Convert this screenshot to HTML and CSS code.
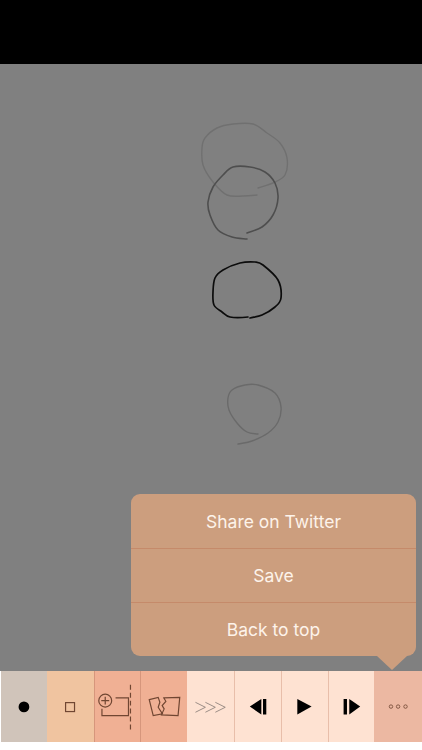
FILE: index.html
```html
<!DOCTYPE html>
<html lang="en">

<head>
    <meta charset="UTF-8">
    <meta name="viewport" content="width=device-width, initial-scale=1.0">
    <title>Sketch</title>
    <link rel="stylesheet" href="styles.css">
</head>

<body>
    <div class="topbar"></div>

    <div class="canvas">
        <!-- strokes, viewBox uses page coordinates -->
        <svg class="canvas__strokes" viewBox="0 64 422 607">
            <path class="stroke stroke--faint" d="M258 188 C263 186 268.5 185.2 273 183 S282.7 179.2 285 175 S287.8 163.3 287 158 S283.3 147.2 280 143 S271.5 136.2 267 133 S258.7 125.5 253 124 S239 123.3 233 124 S221.7 125.7 217 128 S207.5 134.7 205 138 S202.3 143.5 202 148 S201.2 159.3 203 165 S209 177 213 182 S222 192.7 227 195 S238 196 243 196 S252 195.5 257 195" />
            <path class="stroke stroke--mid" d="M247 233 C252 231 257.7 230 262 227 S270.3 219.8 273 215 S277.7 203.3 278 198 S277.2 187.3 275 183 S269.2 174.7 265 172 S255.3 167.8 250 167 S237.5 165.7 233 167 S226.3 171.7 223 175 S215.5 182.5 213 187 S208.5 197.3 208 202 S208.3 210.3 210 215 S214.3 226.3 218 230 S227.2 235.5 232 237 S242 238.5 247 239" />
            <path class="stroke stroke--dark" d="M250 318 C254 317 257.8 316.8 262 315 S271.8 309.8 275 307 S280.5 302.5 281 298 S281 285.5 278 280 S266.8 268 263 265 S258.8 262.3 255 262 S245.3 261.7 240 263 S227.2 267.5 223 270 S216.7 274.3 215 278 S213.2 287.5 213 292 S212.5 301.7 214 305 S219.3 310 222 312 S225.7 316.2 230 317 S243 317.5 248 317" />
            <path class="stroke stroke--soft" d="M238 444 C243 443 247 442.8 252 441 S263.7 436.2 268 433 S275.8 426.3 278 422 S281.5 411.8 281 407 S278.8 396.7 275 393 S263 386.3 258 385 S249.3 384.2 245 385 S234.8 387.8 232 390 S228.5 394.7 228 398 S227.5 405.8 229 410 S234 419.3 237 423 S243.5 430.2 247 432 S254 433.5 258 434" />
        </svg>

        <div class="popup">
            <div class="popup__item">Share on Twitter</div>
            <div class="popup__item">Save</div>
            <div class="popup__item">Back to top</div>
            <div class="popup__arrow"></div>
        </div>
    </div>

    <div class="toolbar">
        <div class="tool tool--grey">
            <svg viewBox="0 0 47 71"><circle cx="23.1" cy="35.3" r="5.4" fill="#000" /></svg>
        </div>
        <div class="tool tool--peach">
            <svg viewBox="0 0 47 71"><rect class="line" x="18.7" y="31" width="9" height="9" /></svg>
        </div>
        <div class="tool tool--salmon tool--edged">
            <svg viewBox="0 0 47 71">
                <circle class="line" cx="11.3" cy="29" r="6.5" />
                <path class="line" d="M11.3 25 V33 M7.3 29 H15.3" />
                <path class="line" d="M21.7 26.3 H34.7 V44 H8 V37.3" />
                <path class="line line--dash" d="M36.7 13 V58" />
            </svg>
        </div>
        <div class="tool tool--salmon">
            <svg viewBox="0 0 47 71">
                <path class="line" d="M8.3 28 L17.3 25.7 L19 30.7 L17.3 35.7 L21.6 42.3 L12.3 44 Z" />
                <path class="line" d="M23 26.3 L39 25.7 L37.3 44 L20.6 43.3 L23.3 37.3 L21.3 34 L25 29.7 Z" />
            </svg>
        </div>
        <div class="tool">
            <svg viewBox="0 0 47 71">
                <path class="line line--thin" d="M8.5 30.7 L18.5 35.7 L8.5 40.7 M18.5 30.7 L28.5 35.7 L18.5 40.7 M28.5 30.7 L38.5 35.7 L28.5 40.7" />
            </svg>
        </div>
        <div class="tool tool--sep">
            <svg viewBox="0 0 47 71"><path d="M15.9 35 L27.5 27.3 V43 Z M29.2 27.3 H32.5 V43 H29.2 Z" /></svg>
        </div>
        <div class="tool tool--sep">
            <svg viewBox="0 0 47 71"><path d="M16.4 27.3 L30.8 35 L16.4 43 Z" /></svg>
        </div>
        <div class="tool tool--sep">
            <svg viewBox="0 0 47 71"><path d="M15.7 27.3 H19.1 V43 H15.7 Z M21.4 27.3 L32.4 35 L21.4 43 Z" /></svg>
        </div>
        <div class="tool tool--pink">
            <svg viewBox="0 0 47 71">
                <circle class="line line--thin" cx="16.7" cy="35" r="1.7" />
                <circle class="line line--thin" cx="23.7" cy="35" r="1.7" />
                <circle class="line line--thin" cx="31" cy="35" r="1.7" />
            </svg>
        </div>
    </div>

    <div class="bottom"></div>
</body>

</html>
```

FILE: styles.css
```css
*,
*::before,
*::after {
    box-sizing: border-box;
}

body {
    margin: 0;
    height: 750px;
    display: flex;
    flex-direction: column;
    background: white;
    font-family: Inter, sans-serif;
    overflow: hidden;
}

.topbar {
    height: 64px;
    background: black;
}

/* canvas */
.canvas {
    height: 607px;
    position: relative;
    background: rgb(128, 128, 128);
}

.canvas__strokes {
    position: absolute;
    top: 0;
    left: 0;
    width: 422px;
    height: 607px;
}

.stroke {
    fill: none;
    stroke-linecap: round;
    stroke-linejoin: round;
    stroke-width: 1.4;
}

.stroke--faint {
    stroke: rgb(112, 112, 112);
}

.stroke--mid {
    stroke: rgb(78, 78, 78);
    stroke-width: 1.6;
}

.stroke--dark {
    stroke: rgb(12, 12, 12);
    stroke-width: 1.7;
}

.stroke--soft {
    stroke: rgb(106, 106, 106);
}

/* popup */
.popup {
    position: absolute;
    right: 6px;
    bottom: 15px;
    width: 285px;
    border-radius: 9px;
    background: rgb(204, 158, 126);
}

.popup__item {
    height: 54px;
    display: flex;
    justify-content: center;
    align-items: center;
    color: rgb(253, 243, 234);
    font-size: 17.5px;
    border-top: 1px solid rgb(197, 138, 106);
}

.popup__item:first-child {
    border-top: 0;
}

.popup__arrow {
    position: absolute;
    top: 100%;
    right: 9px;
    width: 0;
    height: 0;
    border-left: 15px solid transparent;
    border-right: 15px solid transparent;
    border-top: 14px solid rgb(204, 158, 126);
}

/* toolbar */
.toolbar {
    height: 71px;
    padding-left: 0.6px;
    display: grid;
    grid-template-columns: repeat(8, 46.71px) 1fr;
}

.tool {
    background: rgb(254, 226, 210);
}

.tool svg {
    display: block;
    width: 100%;
    height: 100%;
}

.tool--grey {
    background: rgb(208, 196, 186);
}

.tool--peach {
    background: rgb(240, 196, 160);
}

.tool--salmon {
    background: rgb(240, 176, 148);
}

.tool--pink {
    background: rgb(236, 184, 162);
}

.tool--edged {
    box-shadow: inset 1px 0 rgb(214, 150, 124), inset -1px 0 rgb(214, 150, 124), inset 0 -1px rgb(214, 150, 124);
}

.tool--sep {
    box-shadow: inset 1px 0 rgb(232, 190, 170);
}

.line {
    fill: none;
    stroke: rgb(112, 70, 50);
    stroke-width: 1.2;
}

.line--thin {
    stroke-width: 0.8;
}

.line--dash {
    stroke-dasharray: 5 3;
}

.tool:nth-child(5) .line {
    stroke: rgb(130, 120, 115);
}

.bottom {
    flex: 1;
    background: white;
}
```
